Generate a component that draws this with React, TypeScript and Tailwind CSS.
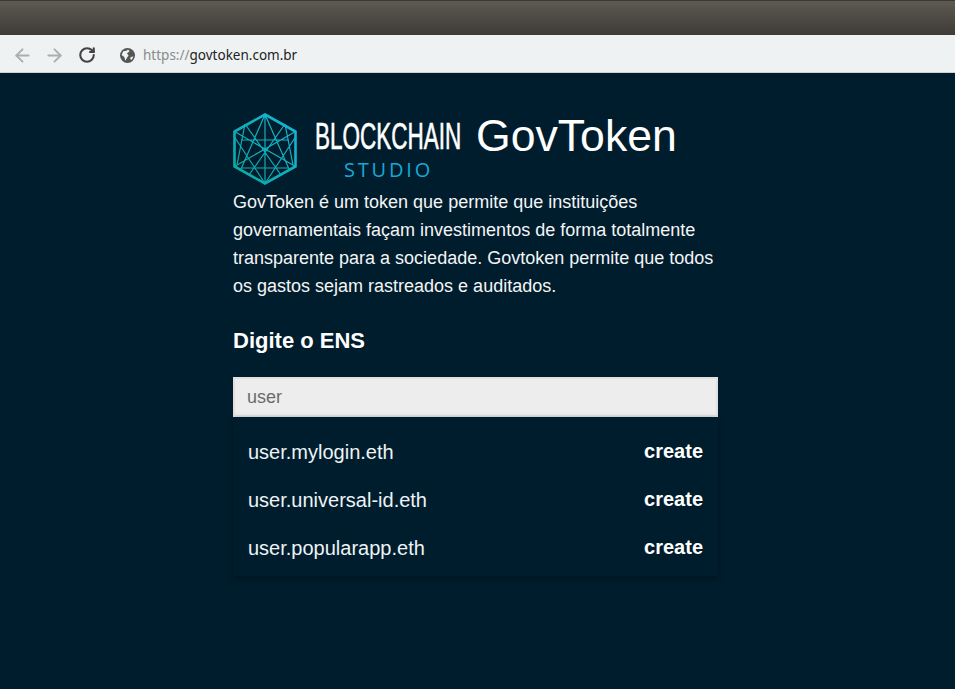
import React from 'react';
import { ArrowLeft, ArrowRight, RotateCw } from 'lucide-react';

const nomes = ['user.mylogin.eth', 'user.universal-id.eth', 'user.popularapp.eth'];

const LogoHex = () => (
  <svg width="64" height="72" viewBox="0 0 64 72" fill="none" className="shrink-0">
    <defs>
      <linearGradient id="hexGrad" x1="0" y1="1" x2="1" y2="0">
        <stop offset="0" stopColor="#0aa8a0" />
        <stop offset="1" stopColor="#16b6d8" />
      </linearGradient>
    </defs>
    <g stroke="url(#hexGrad)">
      <path d="M32 1.500 62.500 18.500V53.500L32 70.500 1.500 53.500V18.500Z" strokeWidth="2.600" />
      <path
        d="M32 1.500V70.500M1.500 18.500 32 36 62.500 18.500M1.500 53.500 32 36 62.500 53.500M12 11 4 52M52 11 60 52M32 1.500 8 56M32 1.500 56 56M1.500 24 32 70.500M62.500 24 32 70.500M12 11 48 62M52 11 16 62M8 27H56M8 55H56"
        strokeWidth="1.200"
      />
    </g>
  </svg>
);

export default function App() {
  return (
    <div className="w-[955px] h-[689px] overflow-hidden bg-[#001d2d] font-['Liberation_Sans',Arial,sans-serif] text-white">
      <div className="h-[35px] bg-gradient-to-b from-[#5d5a52] to-[#3f3c37] border-t border-[#3a3833]" />
      <div className="h-[38px] flex items-center bg-[#eff2f3] border-b border-[#cfd0d0] pl-[12px] pt-[3px]">
        <ArrowLeft size={21} strokeWidth={2.200} className="text-[#aeaeae]" />
        <ArrowRight size={21} strokeWidth={2.200} className="text-[#aeaeae] ml-[11px]" />
        <RotateCw size={18} strokeWidth={2.800} className="text-[#444] ml-[13px]" />
        <svg width="15" height="15" viewBox="0 0 14 14" className="ml-[24px]">
          <circle cx="7" cy="7" r="7" fill="#555" />
          <path d="M3 3 6 2.500 7.500 1.500 9 3 6.500 5 8 7 6.500 9 5 12 4 8.500 1.500 6.500ZM10 8.500 12.500 8 11 11 9.500 10.500Z" fill="#eff2f3" />
        </svg>
        <span className="ml-[8px] pt-[2px] font-['Noto_Sans',sans-serif] text-[13.500px] leading-none text-[#222]">
          <span className="text-[#8b8b8b]">https://</span>govtoken.com.br
        </span>
      </div>

      <main className="w-[485px] ml-[233px] pt-[40px]">
        <header className="flex items-start h-[75px]">
          <LogoHex />
          <div className="w-[145px] h-[66px] ml-[18px] shrink-0">
            <div className="mt-[5px] text-[36px] leading-[38px] whitespace-nowrap origin-left scale-x-[0.625] [-webkit-text-stroke:0.6px_#fff]">
              BLOCKCHAIN
            </div>
            <div className="ml-[29px] mt-[2px] font-['Open_Sans',sans-serif] text-[20px] leading-[24px] tracking-[2.800px] text-[#14aad6]">
              STUDIO
            </div>
          </div>
          <h1 className="ml-[16px] text-[44.600px] leading-[46px] whitespace-nowrap">GovToken</h1>
        </header>

        <p className="text-[18px] leading-[28px] text-[#f4f5f6]">
          GovToken é um token que permite que instituições
          <br />
          governamentais façam investimentos de forma totalmente
          <br />
          transparente para a sociedade. Govtoken permite que todos
          <br />
          os gastos sejam rastreados e auditados.
        </p>

        <h2 className="mt-[27px] text-[22px] leading-[28px] font-bold">Digite o ENS</h2>

        <div className="mt-[22px] h-[40px] flex items-center bg-[#ededed] border-2 border-[#e0e0e0] px-[12px] text-[18px] text-[#6b6b6b]">
          user
        </div>

        <ul className="pt-[11px] pb-[4px] shadow-[0_2px_6px_rgba(0,0,0,0.35)]">
          {nomes.map((nome) => (
            <li key={nome} className="h-[48px] flex items-center justify-between px-[15px]">
              <span className="text-[20px] text-[#eef3f6]">{nome}</span>
              <span className="text-[20px] font-bold -mt-[3px]">create</span>
            </li>
          ))}
        </ul>
      </main>
    </div>
  );
}
